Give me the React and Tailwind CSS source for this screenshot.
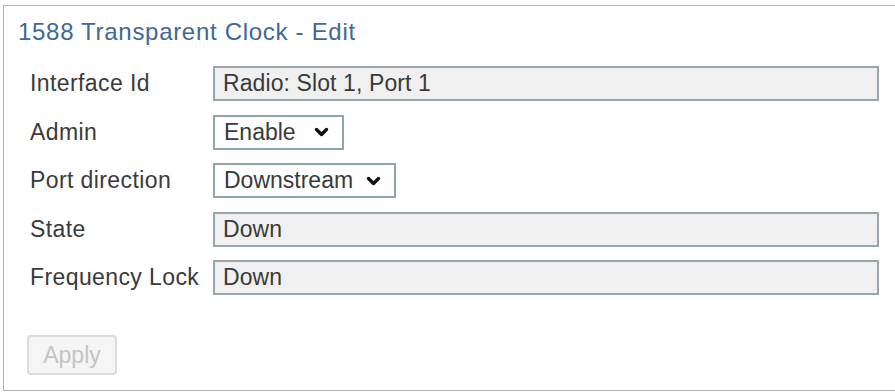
import React from 'react';

const Chevron = () => (
  <svg width="15" height="10" viewBox="0 0 15 10" className="shrink-0">
    <polyline points="2.5,2.5 7.5,7.5 12.5,2.5" fill="none" stroke="#111" strokeWidth="3.4" strokeLinecap="round" strokeLinejoin="round" />
  </svg>
);

const ReadOnly = ({ value }) => (
  <div className="h-[35px] w-[666px] flex items-center px-[8px] bg-[#f0f0f0] border-2 border-[#97a6ad] text-[23px] text-[#3a3a3a] tracking-[0.1px]">
    {value}
  </div>
);

const Select = ({ value, width }) => (
  <div className={`h-[35px] ${width} flex items-center justify-between pl-[9px] pr-[13px] bg-white border-2 border-[#8ea6ab] text-[23px] text-[#3a3a3a]`}>
    <span>{value}</span>
    <Chevron />
  </div>
);

const rows = [
  { label: 'Interface Id', field: <ReadOnly value="Radio: Slot 1, Port 1" /> },
  { label: 'Admin', field: <Select value="Enable" width="w-[131px]" /> },
  { label: 'Port direction', field: <Select value="Downstream" width="w-[183px]" /> },
  { label: 'State', field: <ReadOnly value="Down" /> },
  { label: 'Frequency Lock', field: <ReadOnly value="Down" /> },
];

export default function App() {
  return (
    <div className="w-[895px] h-[392px] bg-white pt-[5px] pl-[3px] overflow-hidden" style={{ fontFamily: '"Liberation Sans", Arial, sans-serif' }}>
      <div className="w-[920px] h-[386px] border border-[#b4b4b4] pl-[14px] pt-[12px]">
        {/* Header */}
        <h1 className="text-[24px] leading-[28px] tracking-[0.7px] text-[#40679a] font-normal">
          1588 Transparent Clock - Edit
        </h1>

        {/* Form rows */}
        <div className="mt-[20px] ml-[12px] flex flex-col gap-[13.5px]">
          {rows.map((row) => (
            <div key={row.label} className="flex items-center">
              <div className="w-[183px] text-[23px] tracking-[0.4px] text-[#3a3a3a] whitespace-nowrap">{row.label}</div>
              {row.field}
            </div>
          ))}
        </div>

        {/* Apply */}
        <div className="mt-[40px] ml-[9px]">
          <button className="w-[90px] h-[40px] rounded-[4px] border-2 border-[#dcdcdc] bg-[#f5f5f5] text-[23px] text-[#c4c4c4]" disabled>
            Apply
          </button>
        </div>
      </div>
    </div>
  );
}
